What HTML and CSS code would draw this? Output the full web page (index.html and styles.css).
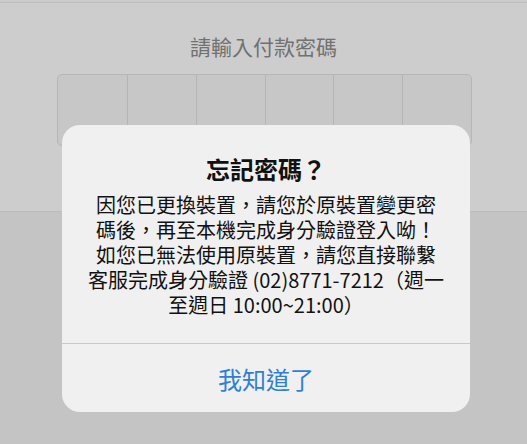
FILE: index.html
```html
<!DOCTYPE html>
<html lang="zh-Hant">
<head>
    <meta charset="UTF-8">
    <meta name="viewport" content="width=device-width, initial-scale=1.0">
    <title>請輸入付款密碼</title>
    <link rel="stylesheet" href="styles.css">
</head>
<body>
<div class="page">
    <div class="top-line"></div>
    <div class="pin-section">
        <h1 class="pin-title">請輸入付款密碼</h1>
        <div class="pin-boxes">
            <div class="pin-cell"></div>
            <div class="pin-cell"></div>
            <div class="pin-cell"></div>
            <div class="pin-cell"></div>
            <div class="pin-cell"></div>
            <div class="pin-cell"></div>
        </div>
    </div>
    <div class="lower"></div>
</div>

<div class="alert">
    <div class="alert-body">
        <h2 class="alert-title">忘記密碼？</h2>
        <p class="alert-text">因您已更換裝置，請您於原裝置變更密<br>碼後，再至本機完成身分驗證登入呦！<br>如您已無法使用原裝置，請您直接聯繫<br>客服完成身分驗證 (02)8771-7212（週一<br>至週日 10:00~21:00）</p>
    </div>
    <button class="alert-button">我知道了</button>
</div>
</body>
</html>
```

FILE: styles.css
```css
body {
    margin: 0;
    font-family: "Noto Sans CJK TC", "Noto Sans", sans-serif;
    background: #c4c4c4;
    width: 527px;
    height: 444px;
    overflow: hidden;
}
.page {
    display: flex;
    flex-direction: column;
    height: 444px;
}
.top-line {
    height: 2px;
    background: #cbcbcb;
    border-bottom: 1px solid #bdbdbd;
}
.pin-section {
    height: 208px;
    background: #cdcdcd;
    border-bottom: 1px solid #bcbcbc;
    display: flex;
    flex-direction: column;
    align-items: center;
}
.pin-title {
    margin: 29px 0 0;
    font-size: 21px;
    line-height: 28px;
    font-weight: 400;
    color: #717171;
}
.pin-boxes {
    margin-top: 14px;
    margin-left: 2px;
    width: 413px;
    height: 70px;
    display: grid;
    grid-template-columns: repeat(6, 1fr);
    border: 1px solid #b6b6b6;
    border-radius: 5px;
    background: #c7c7c7;
    overflow: hidden;
}
.pin-cell {
    border-left: 1px solid #b4b4b4;
}
.pin-cell:first-child {
    border-left: none;
}
.lower {
    flex: 1;
}
.alert {
    position: absolute;
    top: 125px;
    left: 62px;
    width: 408px;
    height: 287px;
    background: #f0f0f0;
    border-radius: 18px;
    display: flex;
    flex-direction: column;
    overflow: hidden;
}
.alert-body {
    padding: 29px 10px 26px;
    text-align: center;
    border-bottom: 1px solid #c9c9c9;
}
.alert-title {
    margin: 0 0 8px;
    font-size: 24px;
    line-height: 30px;
    font-weight: 700;
    color: #111;
}
.alert-text {
    margin: 0;
    font-size: 20px;
    line-height: 25px;
    color: #111;
    white-space: nowrap;
}
.alert-button {
    flex: 1;
    border: none;
    background: none;
    font-family: inherit;
    font-size: 24px;
    color: #2f7fd5;
    padding: 0;
}
```
